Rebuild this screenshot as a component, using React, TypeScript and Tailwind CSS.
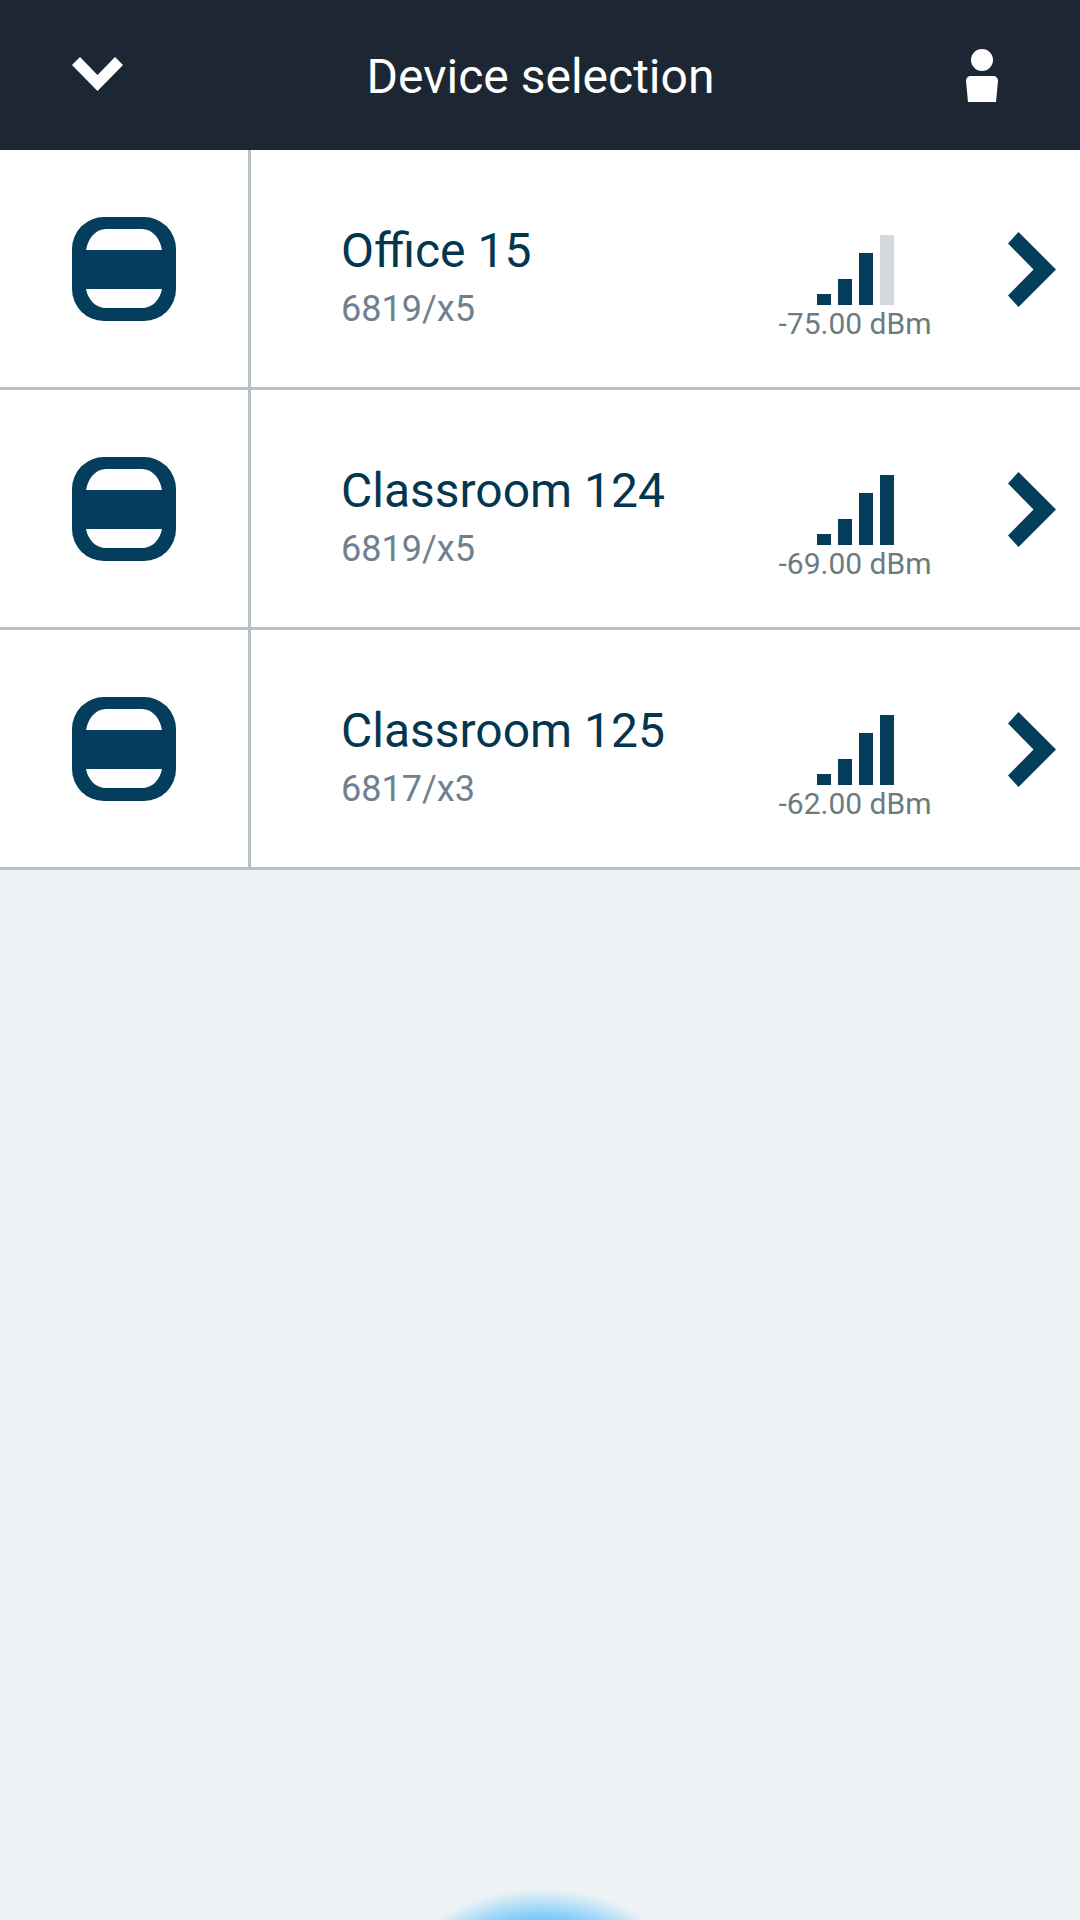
const devices = [
  { name: 'Office 15', model: '6819/x5', signal: '-75.00 dBm', bars: 3 },
  { name: 'Classroom 124', model: '6819/x5', signal: '-69.00 dBm', bars: 4 },
  { name: 'Classroom 125', model: '6817/x3', signal: '-62.00 dBm', bars: 4 },
];

function DeviceIcon() {
  return (
    <svg width="104" height="104" viewBox="0 0 104 104">
      <rect width="104" height="104" rx="32" fill="#053d5c" />
      <path d="M14 33 C16 21 24 12 34 12 H70 C80 12 88 21 90 33 Z" fill="#fff" />
      <path d="M14 72 C16 83 24 91 34 91 H70 C80 91 88 83 90 72 Z" fill="#fff" />
    </svg>
  );
}

function SignalBars({ active }: { active: number }) {
  const heights = ['h-[11px]', 'h-[26px]', 'h-[52px]', 'h-[70px]'];
  return (
    <div className="flex items-end gap-[7px] h-[70px]">
      {heights.map((h, i) => (
        <div key={i} className={`w-[14px] ${h} ${i < active ? 'bg-[#053d5c]' : 'bg-[#d3dade]'}`} />
      ))}
    </div>
  );
}

function DeviceRow({ name, model, signal, bars }: { name: string; model: string; signal: string; bars: number }) {
  return (
    <div className="flex h-[240px] bg-white border-b-[3px] border-[#b3c3c8]">
      <div className="w-[251px] shrink-0 flex items-center justify-center border-r-[3px] border-[#b3c3c8]">
        <DeviceIcon />
      </div>
      <div className="flex-1 flex items-center pl-[90px]">
        <div className="flex-1 flex flex-col gap-[9px] pt-[17px]">
          <span className="text-[48px] leading-[54px] text-[#04364f]">{name}</span>
          <span className="text-[36px] leading-[44px] text-[#6f8190]">{model}</span>
        </div>
        <div className="w-[154px] flex flex-col items-center mt-[40px] mr-[76px]">
          <SignalBars active={bars} />
          <span className="text-[30px] leading-[38px] text-[#6c7b7e] whitespace-nowrap -mb-[1px]">{signal}</span>
        </div>
        <svg className="mr-[24px] mt-[2px] shrink-0" width="48" height="75" viewBox="0 0 48 75">
          <path d="M10.5 0 L48 37.5 L10.5 75 L0 63.5 L25.5 37.5 L0 11.5 Z" fill="#053d5c" />
        </svg>
      </div>
    </div>
  );
}

export default function App() {
  return (
    <div className="relative h-[1920px] w-[1080px] overflow-hidden bg-[#edf3f5] font-['Roboto',sans-serif]">
      <div className="flex items-center justify-between h-[150px] bg-[#1c2733] pl-[72px] pr-[81px]">
        <svg className="-mt-[2px]" width="51" height="34" viewBox="0 0 51 34">
          <path d="M0 8 L8 0 L25.5 18 L43 0 L51 8 L25.5 34 Z" fill="#fff" />
        </svg>
        <span className="text-[48px] leading-none text-white mt-[4px] mr-[7px]">Device selection</span>
        <svg className="mt-[2px]" width="34" height="54" viewBox="0 0 34 54">
          <circle cx="17" cy="11" r="11" fill="#fff" />
          <path d="M6 27 H28 C31 27 33 29 33 32 L31 53 H3 L1 32 C1 29 3 27 6 27 Z" fill="#fff" />
        </svg>
      </div>

      {devices.map((d) => (
        <DeviceRow key={d.name} {...d} />
      ))}

      {/* glow from the bottom edge */}
      <div className="absolute left-[412px] top-[1889px] w-[260px] h-[150px] rounded-[50%] bg-[radial-gradient(closest-side,#4db9fb_0%,#4db9fb_45%,#edf3f500_100%)]" />
    </div>
  );
}
